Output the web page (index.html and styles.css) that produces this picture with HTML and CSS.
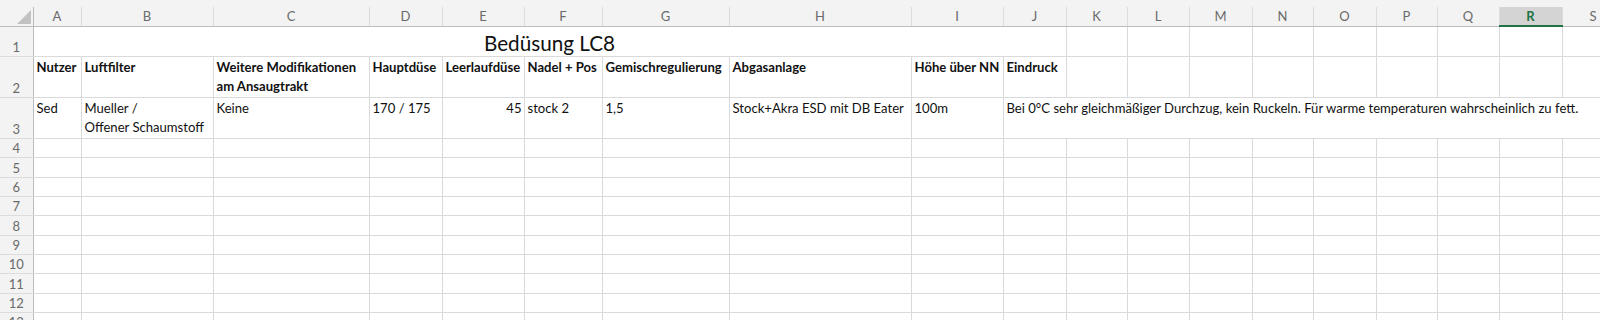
FILE: index.html
```html
<html>
<head>
<title>Bedüsung LC8</title>
<link rel="stylesheet" href="styles.css">
</head>
<body>

<div class="strip"></div>
<table class="sheet">
  <colgroup>
    <col class="w-rh">
    <col class="w-a"><col class="w-b"><col class="w-c"><col class="w-d"><col class="w-e">
    <col class="w-f"><col class="w-g"><col class="w-h"><col class="w-i"><col class="w-j">
    <col class="w-k"><col class="w-l"><col class="w-m"><col class="w-n"><col class="w-o">
    <col class="w-p"><col class="w-q"><col class="w-r"><col class="w-s">
  </colgroup>
  <tr class="cols">
    <th class="corner"><span class="tri"></span></th>
    <th>A</th><th>B</th><th>C</th><th>D</th><th>E</th><th>F</th><th>G</th><th>H</th><th>I</th><th>J</th>
    <th>K</th><th>L</th><th>M</th><th>N</th><th>O</th><th>P</th><th>Q</th><th class="sel">R</th><th>S</th>
  </tr>
  <tr class="r-title">
    <th class="rn">1</th>
    <td colspan="10" class="title">Bedüsung LC8</td>
    <td></td><td></td><td></td><td></td><td></td><td></td><td></td><td></td><td></td>
  </tr>
  <tr class="r-tall head">
    <th class="rn">2</th>
    <td>Nutzer</td>
    <td>Luftfilter</td>
    <td>Weitere Modifikationen<br>am Ansaugtrakt</td>
    <td>Hauptdüse</td>
    <td>Leerlaufdüse</td>
    <td>Nadel + Pos</td>
    <td>Gemischregulierung</td>
    <td>Abgasanlage</td>
    <td>Höhe über NN</td>
    <td>Eindruck</td>
    <td></td><td></td><td></td><td></td><td></td><td></td><td></td><td></td><td></td>
  </tr>
  <tr class="r-tall">
    <th class="rn">3</th>
    <td>Sed</td>
    <td>Mueller /<br>Offener Schaumstoff</td>
    <td>Keine</td>
    <td>170 / 175</td>
    <td class="num">45</td>
    <td>stock 2</td>
    <td>1,5</td>
    <td>Stock+Akra ESD mit DB Eater</td>
    <td>100m</td>
    <td colspan="10">Bei 0°C sehr gleichmäßiger Durchzug, kein Ruckeln. Für warme temperaturen wahrscheinlich zu fett.</td>
  </tr>
  <tr><th class="rn">4</th><td></td><td></td><td></td><td></td><td></td><td></td><td></td><td></td><td></td><td></td><td></td><td></td><td></td><td></td><td></td><td></td><td></td><td></td><td></td></tr>
  <tr><th class="rn">5</th><td></td><td></td><td></td><td></td><td></td><td></td><td></td><td></td><td></td><td></td><td></td><td></td><td></td><td></td><td></td><td></td><td></td><td></td><td></td></tr>
  <tr><th class="rn">6</th><td></td><td></td><td></td><td></td><td></td><td></td><td></td><td></td><td></td><td></td><td></td><td></td><td></td><td></td><td></td><td></td><td></td><td></td><td></td></tr>
  <tr><th class="rn">7</th><td></td><td></td><td></td><td></td><td></td><td></td><td></td><td></td><td></td><td></td><td></td><td></td><td></td><td></td><td></td><td></td><td></td><td></td><td></td></tr>
  <tr><th class="rn">8</th><td></td><td></td><td></td><td></td><td></td><td></td><td></td><td></td><td></td><td></td><td></td><td></td><td></td><td></td><td></td><td></td><td></td><td></td><td></td></tr>
  <tr><th class="rn">9</th><td></td><td></td><td></td><td></td><td></td><td></td><td></td><td></td><td></td><td></td><td></td><td></td><td></td><td></td><td></td><td></td><td></td><td></td><td></td></tr>
  <tr><th class="rn">10</th><td></td><td></td><td></td><td></td><td></td><td></td><td></td><td></td><td></td><td></td><td></td><td></td><td></td><td></td><td></td><td></td><td></td><td></td><td></td></tr>
  <tr><th class="rn">11</th><td></td><td></td><td></td><td></td><td></td><td></td><td></td><td></td><td></td><td></td><td></td><td></td><td></td><td></td><td></td><td></td><td></td><td></td><td></td></tr>
  <tr><th class="rn">12</th><td></td><td></td><td></td><td></td><td></td><td></td><td></td><td></td><td></td><td></td><td></td><td></td><td></td><td></td><td></td><td></td><td></td><td></td><td></td></tr>
  <tr><th class="rn">13</th><td></td><td></td><td></td><td></td><td></td><td></td><td></td><td></td><td></td><td></td><td></td><td></td><td></td><td></td><td></td><td></td><td></td><td></td><td></td></tr>
</table>

</body>
</html>
```

FILE: styles.css
```css
* {
  box-sizing: border-box;
}

body {
  margin: 0;
  background: #fff;
  overflow: hidden;
  font-family: Lato, "Liberation Sans", sans-serif;
}

.strip {
  height: 7px;
  background: #f3f3f3;
}

.sheet {
  border-collapse: collapse;
  table-layout: fixed;
  width: 1624px;
}

.w-rh { width: 33px; }
.w-a { width: 48px; }
.w-b { width: 132px; }
.w-c { width: 156px; }
.w-d { width: 73px; }
.w-e { width: 82px; }
.w-f { width: 78px; }
.w-g { width: 127px; }
.w-h { width: 182px; }
.w-i { width: 92px; }
.w-j { width: 63px; }
.w-k { width: 61px; }
.w-l { width: 62px; }
.w-m { width: 63px; }
.w-n { width: 61px; }
.w-o { width: 63px; }
.w-p { width: 61px; }
.w-q { width: 62px; }
.w-r { width: 63px; }
.w-s { width: 62px; }

/* column letters */
.cols th {
  height: 17px;
  padding: 0;
  background: #f3f3f3;
  color: #6a6a6a;
  font-size: 13px;
  font-weight: normal;
  border-left: 1px solid #dcdcdc;
  border-right: 1px solid #dcdcdc;
  border-bottom: 1px solid #bcbcbc;
}

.cols th.corner {
  position: relative;
  border-left: none;
  border-right: 1px solid #bcbcbc;
}

.tri {
  position: absolute;
  right: 2px;
  bottom: 2px;
  width: 0;
  height: 0;
  border-left: 14px solid transparent;
  border-bottom: 14px solid #c2c2c2;
}

.cols th.sel {
  background: #d4d4d4;
  color: #217346;
  font-weight: bold;
  border-bottom: 2px solid #217346;
}

/* row numbers */
.rn {
  padding: 0 0 1px 0;
  background: #f3f3f3;
  color: #6a6a6a;
  font-size: 13px;
  font-weight: normal;
  text-align: center;
  vertical-align: bottom;
  border-right: 1px solid #bcbcbc;
  border-bottom: 1px solid #dcdcdc;
}

.sheet tr {
  height: 19.35px;
}

.sheet td {
  padding: 1px 2px 0 3px;
  border: 1px solid #dadada;
  font-size: 13.1px;
  line-height: 19.5px;
  color: #111;
  vertical-align: top;
  white-space: nowrap;
  overflow: hidden;
}

.sheet tr.r-title {
  height: 30px;
}

.sheet tr.r-tall {
  height: 40px;
}

.sheet td.title {
  font-size: 20.7px;
  line-height: 26px;
  text-align: center;
  vertical-align: bottom;
  padding: 0;
}

.head td {
  font-weight: bold;
}

.sheet td.num {
  text-align: right;
}
```
